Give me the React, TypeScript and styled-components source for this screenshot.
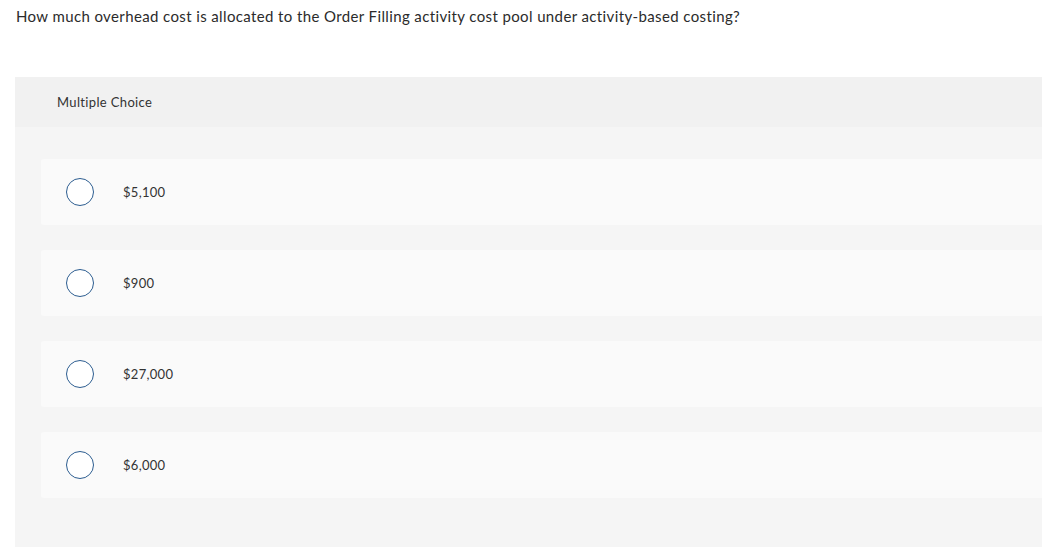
import React from 'react';
import styled, { createGlobalStyle } from 'styled-components';

const GlobalStyle = createGlobalStyle`
  html, body {
    margin: 0;
    padding: 0;
    background: #ffffff;
    overflow: hidden;
  }
  body {
    font-family: Lato, "Open Sans", "Liberation Sans", sans-serif;
    color: #333333;
  }
`;

const Page = styled.div`
  padding: 7px 0 0 15px;
  height: 547px;
  box-sizing: border-box;
  display: flex;
  flex-direction: column;
`;

const Question = styled.p`
  margin: 0 0 0 1px;
  font-size: 15px;
  line-height: 18px;
  color: #2b2b2b;
  letter-spacing: 0.38px;
`;

const Panel = styled.section`
  margin-top: 52px;
  flex: 1;
  background: #f5f5f5;
  display: flex;
  flex-direction: column;
`;

const PanelHeader = styled.header`
  height: 50px;
  background: #f1f1f1;
  display: flex;
  align-items: center;
  padding-left: 42px;
  font-size: 13px;
  letter-spacing: 0.35px;
  color: #333333;
`;

const OptionList = styled.ul`
  list-style: none;
  margin: 0;
  padding: 32px 0 0 26px;
  display: flex;
  flex-direction: column;
  gap: 25px;
`;

const Option = styled.li`
  height: 66px;
  background: #fafafa;
  border-radius: 3px 0 0 3px;
  display: flex;
  align-items: center;
  padding-left: 25px;
`;

const Radio = styled.span`
  width: 26px;
  height: 26px;
  border: 1.5px solid #2c5d90;
  border-radius: 50%;
  background: #ffffff;
  flex-shrink: 0;
`;

const Label = styled.span`
  margin-left: 29px;
  font-size: 13px;
  letter-spacing: 0.3px;
  color: #333333;
`;

const choices = ['$5,100', '$900', '$27,000', '$6,000'];

const App: React.FC = () => {
  return (
    <>
      <GlobalStyle />
      <Page>
        <Question>
          How much overhead cost is allocated to the Order Filling activity cost pool under activity-based costing?
        </Question>
        <Panel>
          <PanelHeader>Multiple Choice</PanelHeader>
          <OptionList>
            {choices.map((c) => (
              <Option key={c}>
                <Radio />
                <Label>{c}</Label>
              </Option>
            ))}
          </OptionList>
        </Panel>
      </Page>
    </>
  );
};

export default App;
